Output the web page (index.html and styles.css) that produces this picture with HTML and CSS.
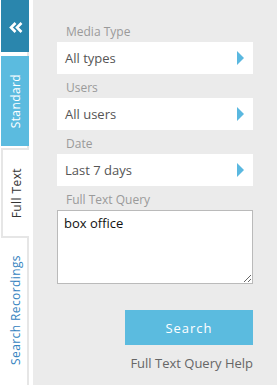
FILE: index.html
```html
<!DOCTYPE html>
<html lang="en">
<head>
    <meta charset="UTF-8">
    <meta name="viewport" content="width=device-width, initial-scale=1.0">
    <title>Search</title>
    <link rel="stylesheet" href="styles.css">
</head>
<body>
    <div class="sidebar">
        <div class="tabs">
            <div class="tab tab-collapse">
                <svg width="28" height="52" viewBox="0 0 28 52">
                    <polyline points="14.5,23 10,27.5 14.5,32" fill="none" stroke="#fff" stroke-width="2.6"/>
                    <polyline points="20.5,23 16,27.5 20.5,32" fill="none" stroke="#fff" stroke-width="2.6"/>
                </svg>
            </div>
            <div class="tab tab-standard"><span>Standard</span></div>
            <div class="tab tab-active"><span>Full Text</span></div>
            <div class="tab tab-link"><span>Search Recordings</span></div>
        </div>
    </div>
    <div class="main">
        <div class="field">
            <label>Media Type</label>
            <div class="select">All types<span class="arrow"></span></div>
        </div>
        <div class="field">
            <label>Users</label>
            <div class="select">All users<span class="arrow"></span></div>
        </div>
        <div class="field">
            <label>Date</label>
            <div class="select">Last 7 days<span class="arrow"></span></div>
        </div>
        <div class="field">
            <label for="query">Full Text Query</label>
            <textarea id="query">box office</textarea>
        </div>
        <div class="actions">
            <button type="button" class="search-btn">Search</button>
            <a class="help">Full Text Query Help</a>
        </div>
    </div>
</body>
</html>
```

FILE: styles.css
```css
body {
    margin: 0;
    height: 385px;
    display: flex;
    font-family: "Open Sans", Arial, sans-serif;
    overflow: hidden;
}
.sidebar {
    width: 33px;
    background-color: #fff;
    flex-shrink: 0;
}
.tabs {
    margin-left: 1px;
    width: 28px;
    height: 100%;
    display: flex;
    flex-direction: column;
    box-shadow: inset -2px 0 #e6e6e6;
}
.tab {
    display: flex;
    align-items: center;
    justify-content: center;
    font-size: 12px;
    letter-spacing: 0.4px;
}
.tab span {
    writing-mode: vertical-rl;
    transform: rotate(180deg);
}
.tab-collapse {
    height: 52px;
    background-color: #2a86ad;
}
.tab-collapse svg {
    display: block;
}
.tab-standard {
    margin-top: 4px;
    height: 90px;
    background-color: #5bbbdf;
    color: #fff;
}
.tab-active {
    margin-top: 2px;
    height: 86px;
    background-color: #fff;
    border: 2px solid #e6e6e6;
    border-right: none;
    color: #333;
}
.tab-link {
    margin-top: 12px;
    height: 120px;
    color: #3583c0;
}
.main {
    flex: 1;
    background-color: #ebebeb;
    padding: 24px 24px 0 24px;
}
.field {
    margin-bottom: 6px;
}
.field label {
    display: block;
    font-size: 12px;
    line-height: 16px;
    color: #9a9a9a;
    padding-left: 9px;
    margin-bottom: 2px;
}
.select {
    height: 32px;
    background-color: #fff;
    display: flex;
    align-items: center;
    justify-content: space-between;
    padding: 0 9px 0 8px;
    font-size: 13px;
    color: #555;
}
.arrow {
    width: 0;
    height: 0;
    border-left: 7px solid #5ab8e0;
    border-top: 7px solid transparent;
    border-bottom: 7px solid transparent;
}
textarea {
    display: block;
    box-sizing: border-box;
    width: 100%;
    height: 74px;
    margin: 0;
    border: 1px solid #bababa;
    padding: 3px 6px;
    font-family: "Open Sans", Arial, sans-serif;
    font-size: 13px;
    color: #111;
    outline: none;
}
.actions {
    display: flex;
    flex-direction: column;
    align-items: flex-end;
    margin-top: 26px;
}
.search-btn {
    width: 128px;
    height: 35px;
    border: none;
    background-color: #5bbbdf;
    color: #fff;
    font-family: "Open Sans", Arial, sans-serif;
    font-size: 13px;
    letter-spacing: 1px;
}
.help {
    margin-top: 9px;
    font-size: 13px;
    color: #666;
}
```
